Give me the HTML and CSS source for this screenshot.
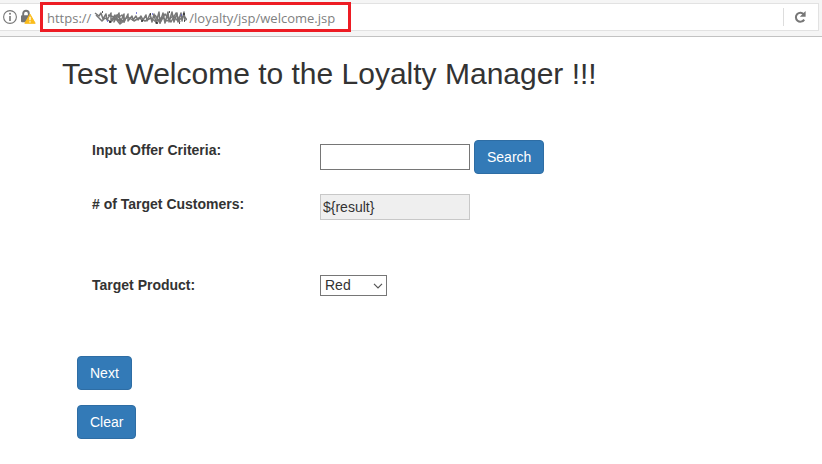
FILE: index.html
```html
<!DOCTYPE html>
<html lang="en">
<head>
<meta charset="utf-8">
<title>Loyalty Manager</title>
<link rel="stylesheet" href="styles.css">
</head>
<body>
<header class="toolbar">
  <div class="address">
    <svg class="info" width="16" height="16" viewBox="0 0 16 16" aria-hidden="true">
      <circle cx="8" cy="8" r="6.4" fill="none" stroke="#777" stroke-width="1.1"/>
      <path d="M8 7v5" stroke="#777" stroke-width="1.6"/>
      <circle cx="8" cy="4.7" r="1" fill="#777"/>
    </svg>
    <svg class="lock" width="16" height="16" viewBox="0 0 16 16" aria-hidden="true">
      <path d="M3.2 7V4.5a2.8 2.8 0 0 1 5.6 0V7" fill="none" stroke="#757575" stroke-width="1.9"/>
      <rect x="1" y="6.3" width="9" height="7" rx="1" fill="#757575"/>
      <path d="M10 5.2L15.2 14.3H4.8Z" fill="#fbbc1b" stroke="#fbbc1b" stroke-width="1" stroke-linejoin="round"/>
      <path d="M10 7.8v3.4M10 12.2v1.4" stroke="#fff" stroke-width="1.3"/>
    </svg>
    <div class="url-wrap">
      <input class="url" type="text" aria-label="Address" value="https://                             /loyalty/jsp/welcome.jsp">
      <svg class="scribble" width="94" height="16" viewBox="0 0 94 16" aria-hidden="true">
        <g fill="none" stroke="#777" stroke-width="1.5" stroke-linejoin="round">
          <path d="M2 3l4 3 2-3 2 6 3-5 1 6 4-7 0 8 4-6-1 7 5-9 1 10 4-9 0 8 4-8 0 7 4-5 1 4 3-4 2 4 3-4 2 4 3-5 1 6 3-7 2 8 2-8 2 9 3-11 1 11 3-10 2 10 3-11 1 10 3-10 2 10 3-9 1 9 3-9 1 8 2-9 1 9"/>
          <path d="M3 5l6 6 3-3 6 4 6-7 5 6 6-4 6 4 5-3 6 3 6-3 5 4 6-5 5 4 6-5 5 5 6-5 3 4"/>
          <path d="M23 9l4 5 5-4-3-5-6 4 9 3M62 5l5 8 5-9 6 8 5-9 4 9M15 5l6 2 4-2"/>
        </g>
        <path d="M9 2h1M16 12h2M48 11h2M57 4h1M63 13h2M76 2h1M86 13h1M91 3v2M91 11h1" stroke="#222" stroke-width="1.3"/>
        <path d="M14 11h1M43 3h1M59 4h1M88 5h1" stroke="#5b5bd0" stroke-width="1.5"/>
      </svg>
    </div>
    <button class="reload" type="button" aria-label="Reload">
      <svg width="14" height="14" viewBox="0 0 14 14" aria-hidden="true">
        <path d="M11 4.5A4.5 4.5 0 1 0 11.2 9.6" fill="none" stroke="#777" stroke-width="2"/>
        <path d="M12.6 1v5.8H6.8Z" fill="#777"/>
      </svg>
    </button>
  </div>
</header>
<main class="page">
  <h2 class="title">Test Welcome to the Loyalty Manager !!!</h2>
  <form class="form">
    <div class="row">
      <label for="criteria">Input Offer Criteria:</label>
      <div class="controls">
        <input class="field" id="criteria" type="text">
        <button class="btn" type="button">Search</button>
      </div>
    </div>
    <div class="row">
      <label for="customers"># of Target Customers:</label>
      <div class="controls">
        <input class="field" id="customers" type="text" value="${result}" disabled>
      </div>
    </div>
    <div class="row product">
      <label for="product">Target Product:</label>
      <div class="controls select-wrap">
        <select id="product"><option>Red</option></select>
        <svg class="chevron" width="10" height="6" viewBox="0 0 10 6" aria-hidden="true"><path d="M1 .8l4 4 4-4" fill="none" stroke="#555" stroke-width="1.2"/></svg>
      </div>
    </div>
    <div class="actions">
      <button class="btn" type="button">Next</button>
      <button class="btn" type="button">Clear</button>
    </div>
  </form>
</main>
</body>
</html>
```
FILE: styles.css
```css
*, *::before { box-sizing: border-box; }
body {
  margin: 0;
  background: #fff;
  color: #333;
  font: 14px/20px "Liberation Sans", Arial, sans-serif;
}
input, select, button { font: inherit; color: inherit; }

.toolbar {
  padding: 3px 3px 5px 0;
  background: #f5f5f5;
  border-bottom: 1px solid #c2c2c2;
}
.address {
  display: flex;
  align-items: center;
  height: 28px;
  padding-left: 2px;
  background: #fff;
  border: 1px solid #e2e2e2;
  border-left: 0;
}
.info { flex: none; }
.lock { flex: none; margin-left: 2px; }
.url-wrap {
  position: relative;
  flex: 1;
  margin-left: 10px;
}
.url-wrap::before {
  content: "";
  position: absolute;
  left: -6px;
  top: -3px;
  width: 311px;
  height: 30px;
  border: 3px solid #ed1c24;
  pointer-events: none;
}
.url {
  display: block;
  width: 100%;
  height: 24px;
  padding: 2px 1px 0;
  border: 0;
  outline: 0;
  background: none;
  color: #808080;
  font-family: "Open Sans", "Noto Sans", sans-serif;
  font-size: 13px;
}
.scribble {
  position: absolute;
  left: 47px;
  top: 5px;
}
.reload {
  display: flex;
  align-items: center;
  height: 18px;
  padding: 0 11px 0 9px;
  border: 0;
  border-left: 1px solid #ddd;
  background: none;
}

.page { padding: 20px 62px; }
.title {
  margin: 0;
  font-size: 30px;
  font-weight: 400;
  line-height: 33px;
}
.form { margin-top: 50px; }
.row {
  display: grid;
  grid-template-columns: 228px 1fr;
  margin: 0 0 20px;
  padding-left: 30px;
}
.row label { font-weight: 700; }
.controls {
  display: flex;
  align-items: center;
  gap: 4px;
}
.field {
  width: 150px;
  height: 26px;
  padding: 1px 2px;
  border: 1px solid #767676;
  background: #fff;
}
.field:disabled {
  border-color: #c8c8c8;
  background: #efefef;
  color: #333;
}
.product { margin-top: 55px; }
.select-wrap {
  position: relative;
  width: 67px;
}
.select-wrap select {
  width: 100%;
  height: 21px;
  padding: 0 4px;
  border: 1px solid #767676;
  border-radius: 0;
  background: #fff;
  line-height: 19px;
  appearance: none;
}
.chevron {
  position: absolute;
  right: 4px;
  top: 8px;
  pointer-events: none;
}
.btn {
  padding: 6px 12px;
  border: 1px solid #2e6da4;
  border-radius: 4px;
  background: #337ab7;
  color: #fff;
  line-height: 20px;
}
.actions {
  display: flex;
  flex-direction: column;
  align-items: flex-start;
  gap: 15px;
  margin-top: 60px;
  padding-left: 15px;
}
```
